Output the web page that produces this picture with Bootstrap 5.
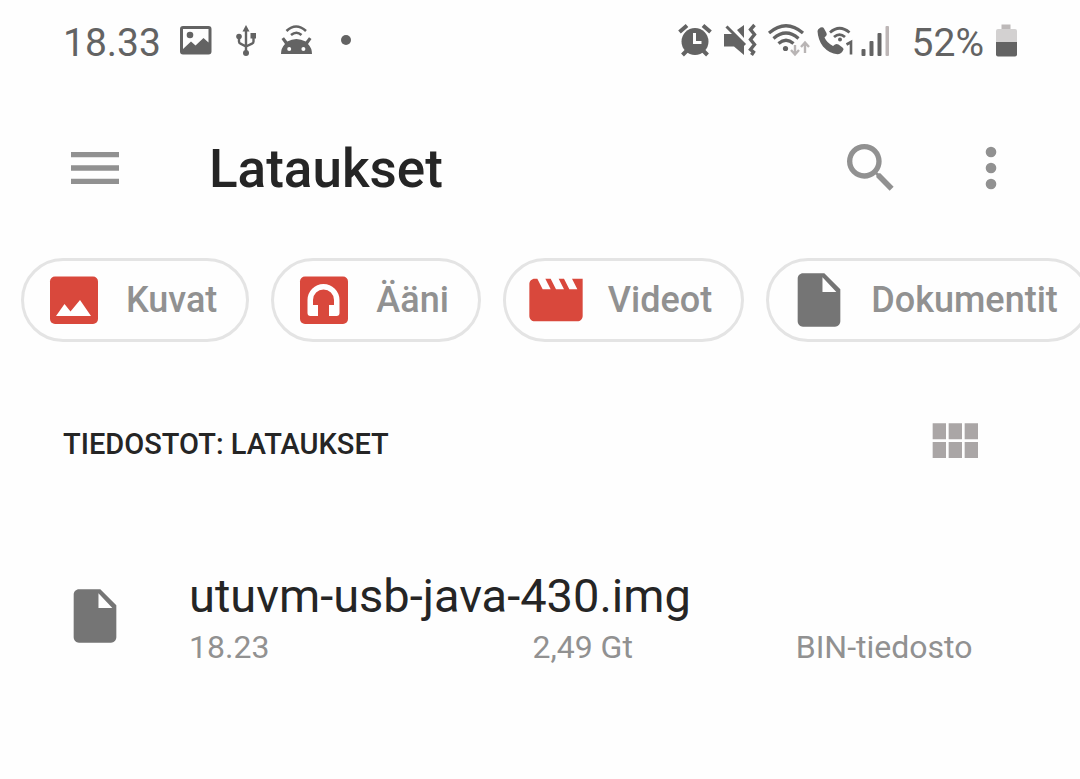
<!DOCTYPE html>
<html lang="fi">
<head>
<meta charset="utf-8">
<meta name="viewport" content="width=device-width, initial-scale=1">
<title>Lataukset</title>
<link href="https://cdn.jsdelivr.net/npm/bootstrap@5.3.0/dist/css/bootstrap.min.css" rel="stylesheet">
<style>
  body { font-family: Roboto, "Noto Sans", sans-serif; background: #fefefe; color: #252525; }
  svg { display: block; flex: none; }
  .status-bar { height: 80px; margin-bottom: 4px; padding: 0 62px; font-size: 39px; line-height: 48px; color: #636363; }
  .status-bar svg { fill: #636363; }
  .status-bar span { padding-top: 6px; }
  .clock { margin: 0 10px 0 1px; }
  .charge { margin: 0 10px 0 12px; }
  .toolbar { height: 168px; padding: 0 57px 0 63px; }
  .toolbar h1 { font-size: 53px; line-height: 64px; font-weight: 500; margin-left: 82px; padding-top: 2px; }
  .icon-btn { color: #919191; }
  .icon-btn svg, .chip svg, .file-row svg { width: 64px; height: 64px; fill: currentColor; }
  .chips { padding: 6px 21px; gap: 22px; }
  .chip { height: 84px; border: 3px solid #e4e4e4; padding: 0 29px 0 18px; gap: 20px; font-size: 36px; line-height: 48px; font-weight: 500; color: #919191; }
  .red-icon { color: #d9483c; }
  .doc-icon { color: #757575; }
  .section-head { padding: 62px 94px 0 63px; }
  .section-head h2 { font-size: 29px; line-height: 40px; font-weight: 500; padding-top: 4px; }
  .section-head .icon-btn { color: #aaa6a6; }
  .file-row { padding: 91px 62px 0 63px; gap: 62px; color: inherit; }
  .file-name { font-size: 47px; line-height: 62px; }
  .file-meta { display: grid; grid-template-columns: 343fr 263fr 222fr; font-size: 32px; line-height: 40px; color: #919191; }
</style>
</head>
<body>
<header class="status-bar d-flex justify-content-between align-items-center">
  <div class="d-flex align-items-center">
    <span class="clock">18.33</span>
    <svg width="50" height="40" viewBox="172 20 50 40" aria-hidden="true">
      <path fill-rule="evenodd" d="M184 26h25.500a3 3 0 0 1 3 3v22.500a3 3 0 0 1-3 3H184a3 3 0 0 1-3-3V29a3 3 0 0 1 3-3zM184 29v20l8-7.500 4.500 4L204.500 38l5 4.500V29z"/><circle cx="191" cy="35" r="3.300"/>
    </svg>
    <svg width="50" height="40" viewBox="222 20 50 40" aria-hidden="true">
      <path d="M247 25l3.500 6.500h-7z"/><circle cx="240" cy="36.500" r="2.800"/><path d="M251.500 33h5.500v5.500h-5.500z"/><circle cx="247" cy="53" r="3"/>
      <path d="M247 29v24M240 37v4.500q0 1.500 1.500 2.200L247 46.500M254.500 37v4.500q0 1.500-1.500 2.200L247 46.500" fill="none" stroke="#636363" stroke-width="2.400"/>
    </svg>
    <svg width="50" height="40" viewBox="272 20 50 40" aria-hidden="true">
      <path fill-rule="evenodd" d="M282 54q0-6 4-10l-3.500-5 2.500-1.800 3.300 4.400q9-5 18.400 0l3.300-4.400 2.500 1.800-3.500 5q4 4 4 10zM290.200 47a2 2 0 1 0 0 4 2 2 0 0 0 0-4zM304.400 47a2 2 0 1 0 0 4 2 2 0 0 0 0-4z"/>
      <path d="M287.500 31q9.500-9 19.500 0M292 35q5.500-4.500 10.500 0" fill="none" stroke="#636363" stroke-width="2.600"/>
    </svg>
    <svg width="50" height="40" viewBox="322 20 50 40" aria-hidden="true"><circle cx="347" cy="40" r="5"/></svg>
  </div>
  <div class="d-flex align-items-center">
    <svg width="46" height="40" viewBox="673 20 46 40" aria-hidden="true">
      <circle cx="696" cy="41.500" r="13.500"/>
      <path d="M680.500 32l7.500-6.500M711.500 32l-7.500-6.500M683.500 55l5-5M708.500 55l-5-5" stroke="#636363" stroke-width="4"/>
      <path d="M695.500 33v9.500h7" fill="none" stroke="#fefefe" stroke-width="3"/>
    </svg>
    <svg width="46" height="40" viewBox="719 20 46 40" aria-hidden="true">
      <path d="M725 34h9l3 2.500 8 8V55l-10-8.500h-10zM738 30l7-5v13z"/>
      <path d="M727.500 26.500L746 45" stroke="#636363" stroke-width="3"/>
      <path d="M755.500 25l-4 4.500 4 5-4 5 4 5-4 5 3 2.500-2 3" fill="none" stroke="#636363" stroke-width="3.400"/>
    </svg>
    <svg width="48" height="40" viewBox="765 20 48 40" aria-hidden="true">
      <path d="M770 33q17-14.500 34 0M774.500 38.500q12.500-11 25 0M779.500 43.500q7.500-6.500 15 0" fill="none" stroke="#636363" stroke-width="3.200"/>
      <circle cx="786.500" cy="48.500" r="2.600"/>
      <path d="M796 45v9M792 50l4 4.500 4-4.500M806 53v-10M802 47l4-4.500 4 4.500" fill="none" stroke="#b9b5b5" stroke-width="2.400"/>
    </svg>
    <svg width="46" height="40" viewBox="813 20 46 40" aria-hidden="true">
      <path d="M818.500 31q0-2 3-3.500 2.500-1 3.500 1l2.500 4.500q1 2-1 3.500l-1 1q2.500 5.500 8.500 8.500l2-1.500q1.500-1.200 3.500 0l4 3q2 1.500.5 3-2 3.800-5.500 3.800-8-.5-14.500-7.800-5-6.500-5.500-15.500z"/>
      <path d="M831 32.500q9.500-8.500 19.500 0M835 37q5.500-4.800 11 0" fill="none" stroke="#636363" stroke-width="2.800"/>
      <circle cx="841" cy="39.500" r="2"/>
      <path d="M847.500 44.500l4.500-2.500v12.500" fill="none" stroke="#636363" stroke-width="2.600"/>
    </svg>
    <svg width="42" height="40" viewBox="859 20 42 40" aria-hidden="true">
      <rect x="862.500" y="49" width="4" height="7" rx="1"/><rect x="870.500" y="41" width="4" height="15" rx="1"/><rect x="878.500" y="33" width="4" height="23" rx="1"/><rect x="886.500" y="26" width="3.500" height="30" rx="1" fill="#bdb6b6"/>
    </svg>
    <span class="charge">52%</span>
    <svg width="24" height="40" viewBox="994 20 24 40" aria-hidden="true">
      <path d="M1001.500 24.500h9v5h-9z" fill="#bdb9b9"/><path d="M998 29h17q2 0 2 2v11h-21V31q0-2 2-2z" fill="#d3d1d1"/><path d="M996 42h21v12.500q0 2-2 2h-17q-2 0-2-2z"/>
    </svg>
  </div>
</header>

<nav class="toolbar d-flex align-items-center">
  <button type="button" class="icon-btn btn p-0 border-0" aria-label="Valikko"><svg viewBox="0 0 24 24"><path d="M3 18h18v-2H3v2zm0-5h18v-2H3v2zm0-7v2h18V6H3z"/></svg></button>
  <h1 class="mb-0 me-auto">Lataukset</h1>
  <button type="button" class="icon-btn btn p-0 border-0 me-5" aria-label="Hae"><svg viewBox="0 0 24 24"><path d="M15.500 14h-.79l-.28-.27A6.470 6.470 0 0 0 16 9.500 6.500 6.500 0 1 0 9.500 16c1.610 0 3.090-.59 4.230-1.570l.27.28v.79l5 4.990L20.490 19l-4.990-5zm-6 0C7.010 14 5 11.990 5 9.500S7.010 5 9.500 5 14 7.010 14 9.500 11.990 14 9.500 14z"/></svg></button>
  <button type="button" class="icon-btn btn p-0 border-0 ms-2" aria-label="Lisää"><svg viewBox="0 0 24 24"><circle cx="12" cy="6" r="2"/><circle cx="12" cy="12" r="2"/><circle cx="12" cy="18" r="2"/></svg></button>
</nav>

<main>
  <div class="chips d-flex flex-nowrap overflow-hidden">
    <button type="button" class="chip btn rounded-pill d-flex align-items-center flex-shrink-0">
      <svg class="red-icon" viewBox="0 0 64 64" aria-hidden="true"><rect x="8" y="8.500" width="48" height="47.500" rx="5"/><path d="M14 48l8.500-12 6 7.500L38 32l11 16z" fill="#fff"/></svg>Kuvat
    </button>
    <button type="button" class="chip btn rounded-pill d-flex align-items-center flex-shrink-0">
      <svg class="red-icon" viewBox="0 0 64 64" aria-hidden="true"><rect x="8" y="8.500" width="48" height="47.500" rx="5"/><path d="M15.500 32a16 16 0 0 1 32 0v13q0 3-3 3H37V37h5v-5a10.500 10.500 0 0 0-21 0v5h5v11h-7.500q-3 0-3-3z" fill="#fff"/></svg>Ääni
    </button>
    <button type="button" class="chip btn rounded-pill d-flex align-items-center flex-shrink-0">
      <svg class="red-icon" viewBox="0 0 24 24" aria-hidden="true"><path d="M18 4l2 4h-3l-2-4h-2l2 4h-3l-2-4H8l2 4H7L5 4H4c-1.100 0-1.990.9-1.990 2L2 18c0 1.100.9 2 2 2h16c1.100 0 2-.9 2-2V4h-4z"/></svg>Videot
    </button>
    <button type="button" class="chip btn rounded-pill d-flex align-items-center flex-shrink-0">
      <svg class="doc-icon" viewBox="0 0 24 24" aria-hidden="true"><path d="M6 2c-1.100 0-1.990.9-1.990 2L4 20c0 1.100.89 2 1.990 2H18c1.100 0 2-.9 2-2V8l-6-6H6zm7.300 7V3.500L18.500 9h-5.200z"/></svg>Dokumentit
    </button>
  </div>

  <div class="section-head d-flex justify-content-between align-items-center">
    <h2 class="mb-0">TIEDOSTOT: LATAUKSET</h2>
    <button type="button" class="icon-btn btn p-0 border-0" aria-label="Ruudukkonäkymä"><svg viewBox="0 0 24 24"><path d="M4 11h5V5H4v6zm0 7h5v-6H4v6zm6 0h5v-6h-5v6zm6 0h5v-6h-5v6zm-6-7h5V5h-5v6zm6-6v6h5V5h-5z"/></svg></button>
  </div>

  <a href="#" class="file-row d-flex align-items-center text-decoration-none">
    <svg class="doc-icon" viewBox="0 0 24 24" aria-hidden="true"><path d="M6 2c-1.100 0-1.990.9-1.990 2L4 20c0 1.100.89 2 1.990 2H18c1.100 0 2-.9 2-2V8l-6-6H6zm7.300 7V3.500L18.500 9h-5.200z"/></svg>
    <div class="flex-grow-1">
      <div class="file-name">utuvm-usb-java-430.img</div>
      <div class="file-meta"><span>18.23</span><span>2,49 Gt</span><span>BIN-tiedosto</span></div>
    </div>
  </a>
</main>
<script src="https://cdn.jsdelivr.net/npm/bootstrap@5.3.0/dist/js/bootstrap.bundle.min.js"></script>
</body>
</html>
